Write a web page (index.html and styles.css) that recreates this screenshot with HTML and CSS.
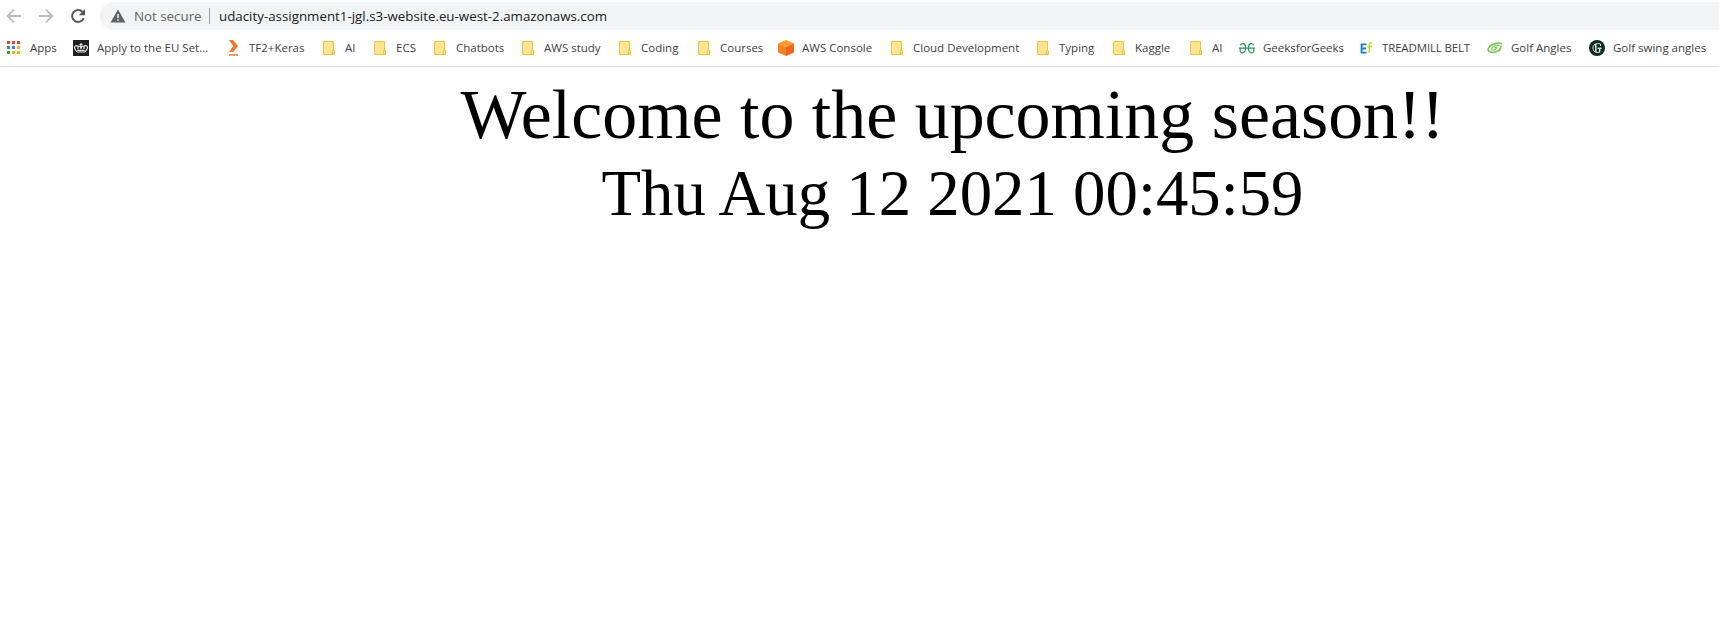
FILE: index.html
```html
<!DOCTYPE html>
<html lang="en">
<head>
<meta charset="utf-8">
<title>Welcome</title>
<link rel="stylesheet" href="styles.css">
</head>
<body>
<svg class="defs" width="0" height="0" aria-hidden="true">
  <symbol id="folder" viewBox="0 0 16 16">
    <path d="M2.5 1.5h10v9.5h1v3.5h-11z" fill="#ffe591" stroke="#e9c246"/>
    <path d="M11.5 13.8v-3.1h2v3.1z" fill="#ffe591" stroke="#e9c246"/>
  </symbol>
</svg>
<header class="browser">
  <div class="toolbar">
    <svg class="nav back" viewBox="0 0 16 16"><path d="M15 8H2M8 1.7L1.7 8L8 14.3" fill="none" stroke="#babcbe" stroke-width="1.8"/></svg>
    <svg class="nav forward" viewBox="0 0 16 16"><path d="M1 8h13M8 1.7L14.3 8L8 14.3" fill="none" stroke="#babcbe" stroke-width="1.8"/></svg>
    <svg class="nav reload" viewBox="0 0 16 16"><path d="M13.7 10.2A6 6 0 1 1 12.6 4" fill="none" stroke="#54585d" stroke-width="2"/><path d="M15 1v6.2H8.8z" fill="#54585d"/></svg>
    <div class="omnibox">
      <svg class="warning" viewBox="0 0 16 14"><path d="M8 .5L15.5 13.5H.5z" fill="#5f6368"/><path d="M7.3 5h1.5v4H7.3zM7.3 10.2h1.5v1.5H7.3z" fill="#f1f3f4"/></svg>
      <span class="security">Not secure</span>
      <span class="divider"></span>
      <span class="url">udacity-assignment1-jgl.s3-website.eu-west-2.amazonaws.com</span>
    </div>
  </div>
  <nav class="bookmarks">
    <a class="bookmark apps"><svg viewBox="0 0 16 16"><path d="M2 1h3v3H2zM7 1h3v3H7zM12 1h3v3h-3z" fill="#ea4335"/><path d="M2 6h3v3H2zM2 11h3v3H2z" fill="#34a04f"/><path d="M7 6h3v3H7z" fill="#2b85f0"/><path d="M12 6h3v3h-3zM7 11h3v3H7zM12 11h3v3h-3z" fill="#fbb605"/></svg><span>Apps</span></a>
    <a class="bookmark"><svg viewBox="0 0 16 16"><path d="M0 0h16v16H0z" fill="#231f20"/><path d="M4 12L2 9C.5 6 3.5 4.500 5 6.500V9M12 12l2-3c1.500-3-1.500-4.500-3-2.500V9M5 6.500c1.500-1 2.500 0 3 2 .5-2 1.500-3 3-2M8 3v6M6.500 4.500h3M4 12h8M4.300 10.300h7.400" fill="none" stroke="#e6e6e6" stroke-width="1.200"/></svg><span>Apply to the EU Set...</span></a>
    <a class="bookmark"><svg viewBox="0 0 16 16"><path d="M4 0h4l5 6-5 6H4l4.300-6z" fill="#f37626"/><path d="M4 14h9v2H4z" fill="#ef9a66"/></svg><span>TF2+Keras</span></a>
    <a class="bookmark"><svg><use href="#folder"/></svg><span>AI</span></a>
    <a class="bookmark"><svg><use href="#folder"/></svg><span>ECS</span></a>
    <a class="bookmark"><svg><use href="#folder"/></svg><span>Chatbots</span></a>
    <a class="bookmark"><svg><use href="#folder"/></svg><span>AWS study</span></a>
    <a class="bookmark"><svg><use href="#folder"/></svg><span>Coding</span></a>
    <a class="bookmark"><svg><use href="#folder"/></svg><span>Courses</span></a>
    <a class="bookmark"><svg viewBox="0 0 16 16"><path d="M8 0l8 3.500L8 7 0 3.500z" fill="#ff9a2b"/><path d="M0 3.500L8 7v9l-8-3.500z" fill="#f58220"/><path d="M16 3.500L8 7v9l8-3.500z" fill="#ec6420"/></svg><span>AWS Console</span></a>
    <a class="bookmark"><svg><use href="#folder"/></svg><span>Cloud Development</span></a>
    <a class="bookmark"><svg><use href="#folder"/></svg><span>Typing</span></a>
    <a class="bookmark"><svg><use href="#folder"/></svg><span>Kaggle</span></a>
    <a class="bookmark"><svg><use href="#folder"/></svg><span>AI</span></a>
    <a class="bookmark"><svg viewBox="0 0 16 16"><path d="M1.200 5.300C2.500 2.700 6.600 2.700 6.600 8S2.500 13.800 1.200 11.500V8.200H14.800V11.500C13.500 13.800 9.400 13.300 9.400 8s4.100-5.300 5.400-2.700M0 8.200h16" fill="none" stroke="#2f9558" stroke-width="1.200"/></svg><span>GeeksforGeeks</span></a>
    <a class="bookmark"><svg viewBox="0 0 16 16"><path d="M7.500 4.400H2.600v8.200h4.900M2.600 8.500h4.500" fill="none" stroke="#1580c0" stroke-width="1.900"/><path d="M13 3c-2-.6-2.700.3-2.700 2v8M8.300 6.500H13" fill="none" stroke="#bdd831" stroke-width="1.500"/></svg><span class="belt">TREADMILL BELT</span></a>
    <a class="bookmark"><svg viewBox="0 0 16 16"><path d="M15.200 3.800C10 1.700 2.500 5 1.200 9c-1 3.500 5.800 4.600 11.300 1.300L14.300 5.800" fill="none" stroke="#7cc653" stroke-width="1.700"/><path d="M13 5.500C9.500 4.700 5 6.500 4.700 8.700c-.2 2 4.300 1.800 5-1.200H7.300" fill="none" stroke="#7cc653" stroke-width="1.200"/></svg><span>Golf Angles</span></a>
    <a class="bookmark"><svg viewBox="0 0 16 16"><circle cx="8" cy="8" r="8" fill="#0b2b26"/><path d="M11.500 6V4C7 2.700 4 4.500 4 8s3 5.300 6.500 4.300" fill="none" stroke="#d9e0df" stroke-width="1"/><path d="M6.800 4v8M10.600 8v4.500M8.600 8.200h4" fill="none" stroke="#d9e0df" stroke-width="1.500"/></svg><span>Golf swing angles</span></a>
  </nav>
</header>
<main class="page">
  <div class="welcome">Welcome to the upcoming season!!</div>
  <div class="clock">Thu Aug 12 2021 00:45:59</div>
</main>
</body>
</html>
```
FILE: styles.css
```css
body {
  margin: 0;
  background: #fff;
  overflow: hidden;
}

.defs {
  display: block;
  height: 0;
}

.browser {
  font-family: "Open Sans", "Noto Sans", sans-serif;
  color: #3c4043;
  border-bottom: 1px solid #dadbdc;
  height: 66px;
}

.toolbar {
  display: flex;
  align-items: center;
  height: 28px;
  padding: 2px 0 0 6px;
}

.nav {
  width: 16px;
  height: 16px;
  flex: none;
}

.forward,
.reload {
  margin-left: 16px;
}

.omnibox {
  display: flex;
  align-items: center;
  flex: 1;
  height: 28px;
  margin-left: 14px;
  padding-left: 10px;
  background: #f1f3f4;
  border-radius: 14px 0 0 14px;
  font-size: 13.33px;
  white-space: nowrap;
}

.warning {
  width: 16px;
  height: 14px;
}

.security {
  width: 75px;
  margin-left: 8px;
  color: #5f6368;
}

.divider {
  width: 1px;
  height: 16px;
  background: #9aa0a6;
}

.url {
  margin-left: 9px;
  color: #202124;
}

.bookmarks {
  display: grid;
  grid-template-columns: 68px 152px 96px 51px 60px 88px 97px 79px 82px 111px 146px 76px 77px 51px 120px 128px 102px 130px;
  height: 36px;
  padding-left: 5px;
}

.bookmark {
  display: flex;
  align-items: center;
  gap: 8px;
  font-size: 11.5px;
  white-space: nowrap;
}

.bookmark svg {
  width: 16px;
  height: 16px;
  flex: none;
}

.bookmark span {
  padding-bottom: 2px;
}

.apps {
  gap: 9px;
}

.bookmark .belt {
  margin-left: -1px;
  letter-spacing: -0.15px;
}

.page {
  padding: 8px 0 0 186px;
  color: #000;
  font-family: "Liberation Serif", "Times New Roman", serif;
  text-align: center;
}

.welcome {
  font-size: 69.9px;
  line-height: 80px;
}

.clock {
  font-size: 64.8px;
  line-height: 76px;
}
```
